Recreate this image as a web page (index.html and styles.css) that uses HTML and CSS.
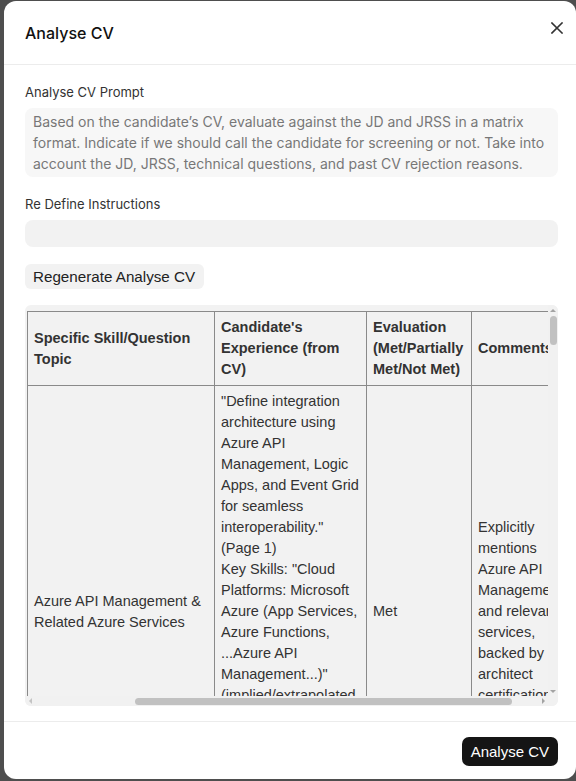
FILE: index.html
```html
<!DOCTYPE html>
<html lang="en">
<head>
<meta charset="utf-8">
<title>Analyse CV</title>
<link rel="stylesheet" href="styles.css">
</head>
<body>
<div class="modal">
  <header class="modal-header">
    <h2 class="modal-title">Analyse CV</h2>
    <button class="close-btn" aria-label="Close">
      <svg width="12" height="12" viewBox="0 0 12 12"><path d="M1 1L11 11M11 1L1 11" stroke="#333" stroke-width="1.6" fill="none" stroke-linecap="square"/></svg>
    </button>
  </header>
  <div class="modal-body">
    <label class="field-label">Analyse CV Prompt</label>
    <div class="prompt-box">Based on the candidate’s CV, evaluate against the JD and JRSS in a matrix format. Indicate if we should call the candidate for screening or not. Take into account the JD, JRSS, technical questions, and past CV rejection reasons.</div>
    <label class="field-label second">Re Define Instructions</label>
    <div class="input-box"></div>
    <div class="regen-row"><button class="regen-btn">Regenerate Analyse CV</button></div>
    <div class="table-wrap">
      <div class="viewport">
        <table class="matrix">
          <colgroup>
            <col class="c1"><col class="c2"><col class="c3"><col class="c4"><col class="c5">
          </colgroup>
          <thead>
            <tr>
              <th>Specific Skill/Question Topic</th>
              <th>Candidate's Experience (from CV)</th>
              <th>Evaluation (Met/Partially Met/Not Met)</th>
              <th>Comments</th>
              <th>Match Summary</th>
            </tr>
          </thead>
          <tbody>
            <tr>
              <td>Azure API Management &amp; Related Azure Services</td>
              <td>"Define integration architecture using Azure API Management, Logic Apps, and Event Grid for seamless interoperability." (Page 1)<br>Key Skills: "Cloud Platforms: Microsoft Azure (App Services, Azure Functions, ...Azure API Management...)" (implied/extrapolated from the skills section and project history; AZ-305 Azure Solutions Architect Expert certification listed on Page 5)</td>
              <td>Met</td>
              <td>Explicitly mentions Azure API Management and relevant services, backed by architect certification.</td>
              <td>Strong match – core JRSS requirement.</td>
            </tr>
            <tr>
              <td>Integration Architecture &amp; Design Patterns</td>
              <td>"Designed event-driven and API-led integration patterns across hybrid cloud and on-premises systems, including pub/sub, request-reply and saga orchestration." (Page 2)<br>Led architecture reviews and produced HLD/LLD documents for enterprise programmes.</td>
              <td>Met</td>
              <td>Demonstrates depth in integration patterns and documentation expected in the JD.</td>
              <td>Strong match.</td>
            </tr>
            <tr>
              <td>API Security (OAuth 2.0, JWT, Azure AD)</td>
              <td>"Implemented OAuth 2.0 and OpenID Connect flows using Azure AD B2C; configured JWT validation policies and subscription keys in APIM." (Page 2)</td>
              <td>Met</td>
              <td>Covers security policies referenced in technical questions; no mention of mTLS.</td>
              <td>Good match.</td>
            </tr>
            <tr>
              <td>DevOps &amp; CI/CD for Integration (Azure DevOps, ARM/Bicep)</td>
              <td>"Built Azure DevOps pipelines for automated deployment of APIM policies and Logic Apps using ARM templates and Bicep." (Page 3)<br>Experience with APIOps is not explicitly stated.</td>
              <td>Partially Met</td>
              <td>Good pipeline exposure; APIOps and Terraform experience unclear from the CV.</td>
              <td>Probe during screening.</td>
            </tr>
            <tr>
              <td>Messaging (Service Bus, Event Hubs, Kafka)</td>
              <td>"Designed message-based integrations using Azure Service Bus topics and queues, with dead-letter handling and retry policies." (Page 3)<br>No evidence of Kafka or Event Hubs at scale.</td>
              <td>Partially Met</td>
              <td>Service Bus is well covered; streaming platforms are a gap versus the JRSS.</td>
              <td>Probe during screening.</td>
            </tr>
            <tr>
              <td>Monitoring &amp; Observability (App Insights, Log Analytics)</td>
              <td>"Set up Application Insights and Log Analytics dashboards for API performance, latency tracking and failure alerts." (Page 4)</td>
              <td>Met</td>
              <td>Matches the operational monitoring expectations in the JD.</td>
              <td>Good match.</td>
            </tr>
            <tr>
              <td>Legacy / On-prem Integration (BizTalk, MuleSoft)</td>
              <td>"Migrated BizTalk Server 2016 orchestrations to Logic Apps Standard with hybrid connectivity via the on-premises data gateway." (Page 4)</td>
              <td>Met</td>
              <td>Directly addresses migration experience; a past rejection reason was lack of BizTalk migration.</td>
              <td>Strong match.</td>
            </tr>
            <tr>
              <td>Hands-on Coding (C#, .NET, Azure Functions)</td>
              <td>"Developed Azure Functions in C# (.NET 6) for custom transformations and API backends." (Page 3)<br>Recent hands-on depth is not quantified.</td>
              <td>Partially Met</td>
              <td>Past CV rejections cited weak hands-on coding; verify with the technical questions.</td>
              <td>Probe during screening.</td>
            </tr>
            <tr>
              <td>Overall Recommendation</td>
              <td>Strong Azure integration background with APIM, Logic Apps, Service Bus and BizTalk migration experience; minor gaps in streaming platforms and APIOps.</td>
              <td>Met</td>
              <td>Call the candidate for screening and probe the partially met areas.</td>
              <td>Call for screening.</td>
            </tr>
          </tbody>
        </table>
      </div>
      <div class="vbar" aria-hidden="true">
        <span class="arrow up"></span>
        <div class="vtrack"><span class="vthumb"></span></div>
        <span class="arrow down"></span>
      </div>
      <div class="hbar" aria-hidden="true">
        <span class="arrow left"></span>
        <div class="htrack"><span class="hthumb"></span></div>
        <span class="arrow right"></span>
      </div>
      <div class="corner"></div>
    </div>
  </div>
  <footer class="modal-footer">
    <button class="primary-btn">Analyse CV</button>
  </footer>
</div>
</body>
</html>
```

FILE: styles.css
```css
* { box-sizing: border-box; }

html, body {
  margin: 0;
  height: 100%;
  overflow: hidden;
}

body {
  background: #4e4e4e;
  font-family: Inter, "Noto Sans", sans-serif;
  color: #222;
}

.modal {
  margin: 1px 0 0 4px;
  width: 572px;
  height: 778px;
  background: #fff;
  border-radius: 12px;
  display: flex;
  flex-direction: column;
}

.modal-header {
  height: 64px;
  flex: none;
  display: flex;
  align-items: center;
  justify-content: space-between;
  padding: 0 18px 0 21px;
  border-bottom: 1px solid #ececec;
}

.modal-title {
  margin: 0;
  font-size: 16px;
  font-weight: 500;
  color: #111;
}

.close-btn {
  align-self: flex-start;
  margin: 21px -5px 0 0;
  padding: 0;
  border: 0;
  background: none;
  width: 12px;
  height: 12px;
  display: flex;
}

.modal-body {
  flex: 1;
  min-height: 0;
  display: flex;
  flex-direction: column;
  padding: 19px 18px 15px 21px;
}

.field-label {
  display: block;
  font-size: 13px;
  line-height: 16px;
  color: #333;
  margin-bottom: 8px;
}

.field-label.second { margin-top: 19px; }

.prompt-box {
  background: #f7f7f7;
  border-radius: 8px;
  padding: 3px 8px;
  height: 69px;
  font-size: 14px;
  line-height: 21px;
  color: #777;
}

.input-box {
  background: #f2f2f2;
  border-radius: 8px;
  height: 27px;
}

.regen-row {
  margin-top: 17px;
  display: flex;
}

.regen-btn {
  border: 0;
  background: #f2f2f2;
  border-radius: 6px;
  height: 25px;
  padding: 0 9px 0 8px;
  font-family: "Liberation Sans", Arial, sans-serif;
  font-size: 15.2px;
  color: #222;
}

/* table area with drawn scrollbars */
.table-wrap {
  margin-top: 16px;
  flex: 1;
  min-height: 0;
  display: grid;
  grid-template-columns: 1fr 10px;
  grid-template-rows: 1fr 10px;
  overflow: hidden;
  background: #f2f2f2;
  border-radius: 6px;
}

.viewport {
  overflow: hidden;
  min-height: 0;
  min-width: 0;
}

.vbar {
  display: flex;
  flex-direction: column;
  align-items: center;
  background: #f1f1f1;
}

.vtrack {
  flex: 1;
  width: 100%;
  display: flex;
  justify-content: center;
  padding-top: 1px;
}

.vthumb {
  width: 7px;
  height: 29px;
  border-radius: 4px;
  background: #c1c1c1;
}

.hbar {
  display: flex;
  align-items: center;
  background: #f1f1f1;
}

.htrack {
  flex: 1;
  height: 100%;
  display: flex;
  align-items: center;
}

.hthumb {
  margin-left: 100px;
  width: 377px;
  height: 7px;
  border-radius: 4px;
  background: #c1c1c1;
}

.corner {
  background: #f1f1f1;
}

.arrow {
  flex: none;
  width: 10px;
  height: 10px;
  display: flex;
  align-items: center;
  justify-content: center;
}

.arrow::before {
  content: "";
  width: 0;
  height: 0;
  border-style: solid;
  border-color: transparent;
}

.arrow.up::before {
  border-width: 0 3px 3px 3px;
  border-bottom-color: #a3a3a3;
}

.arrow.down::before {
  border-width: 3px 3px 0 3px;
  border-top-color: #a3a3a3;
}

.arrow.left::before {
  border-width: 3px 3px 3px 0;
  border-right-color: #c4c4c4;
}

.arrow.right::before {
  border-width: 3px 0 3px 3px;
  border-left-color: #a3a3a3;
}

.matrix {
  margin: 6px 0 0 2px;
  border-collapse: collapse;
  table-layout: fixed;
  width: 690px;
  font-family: "Liberation Sans", Arial, sans-serif;
  font-size: 14.5px;
  line-height: 21px;
  color: #333;
}

.c1 { width: 187px; }
.c2 { width: 152px; }
.c3 { width: 105px; }
.c4 { width: 110px; }
.c5 { width: 136px; }

.matrix th,
.matrix td {
  border: 1px solid #8a8a8a;
  padding: 5px 6px;
  text-align: left;
  vertical-align: middle;
}

.matrix th {
  font-weight: 700;
  color: #333;
}

.modal-footer {
  flex: none;
  border-top: 1px solid #ececec;
  display: flex;
  justify-content: flex-end;
  padding: 15px 18px 13px;
}

.primary-btn {
  border: 0;
  background: #151515;
  color: #fff;
  border-radius: 7px;
  height: 29px;
  padding: 0 9px;
  font-family: "Liberation Sans", Arial, sans-serif;
  font-size: 15px;
}
```
